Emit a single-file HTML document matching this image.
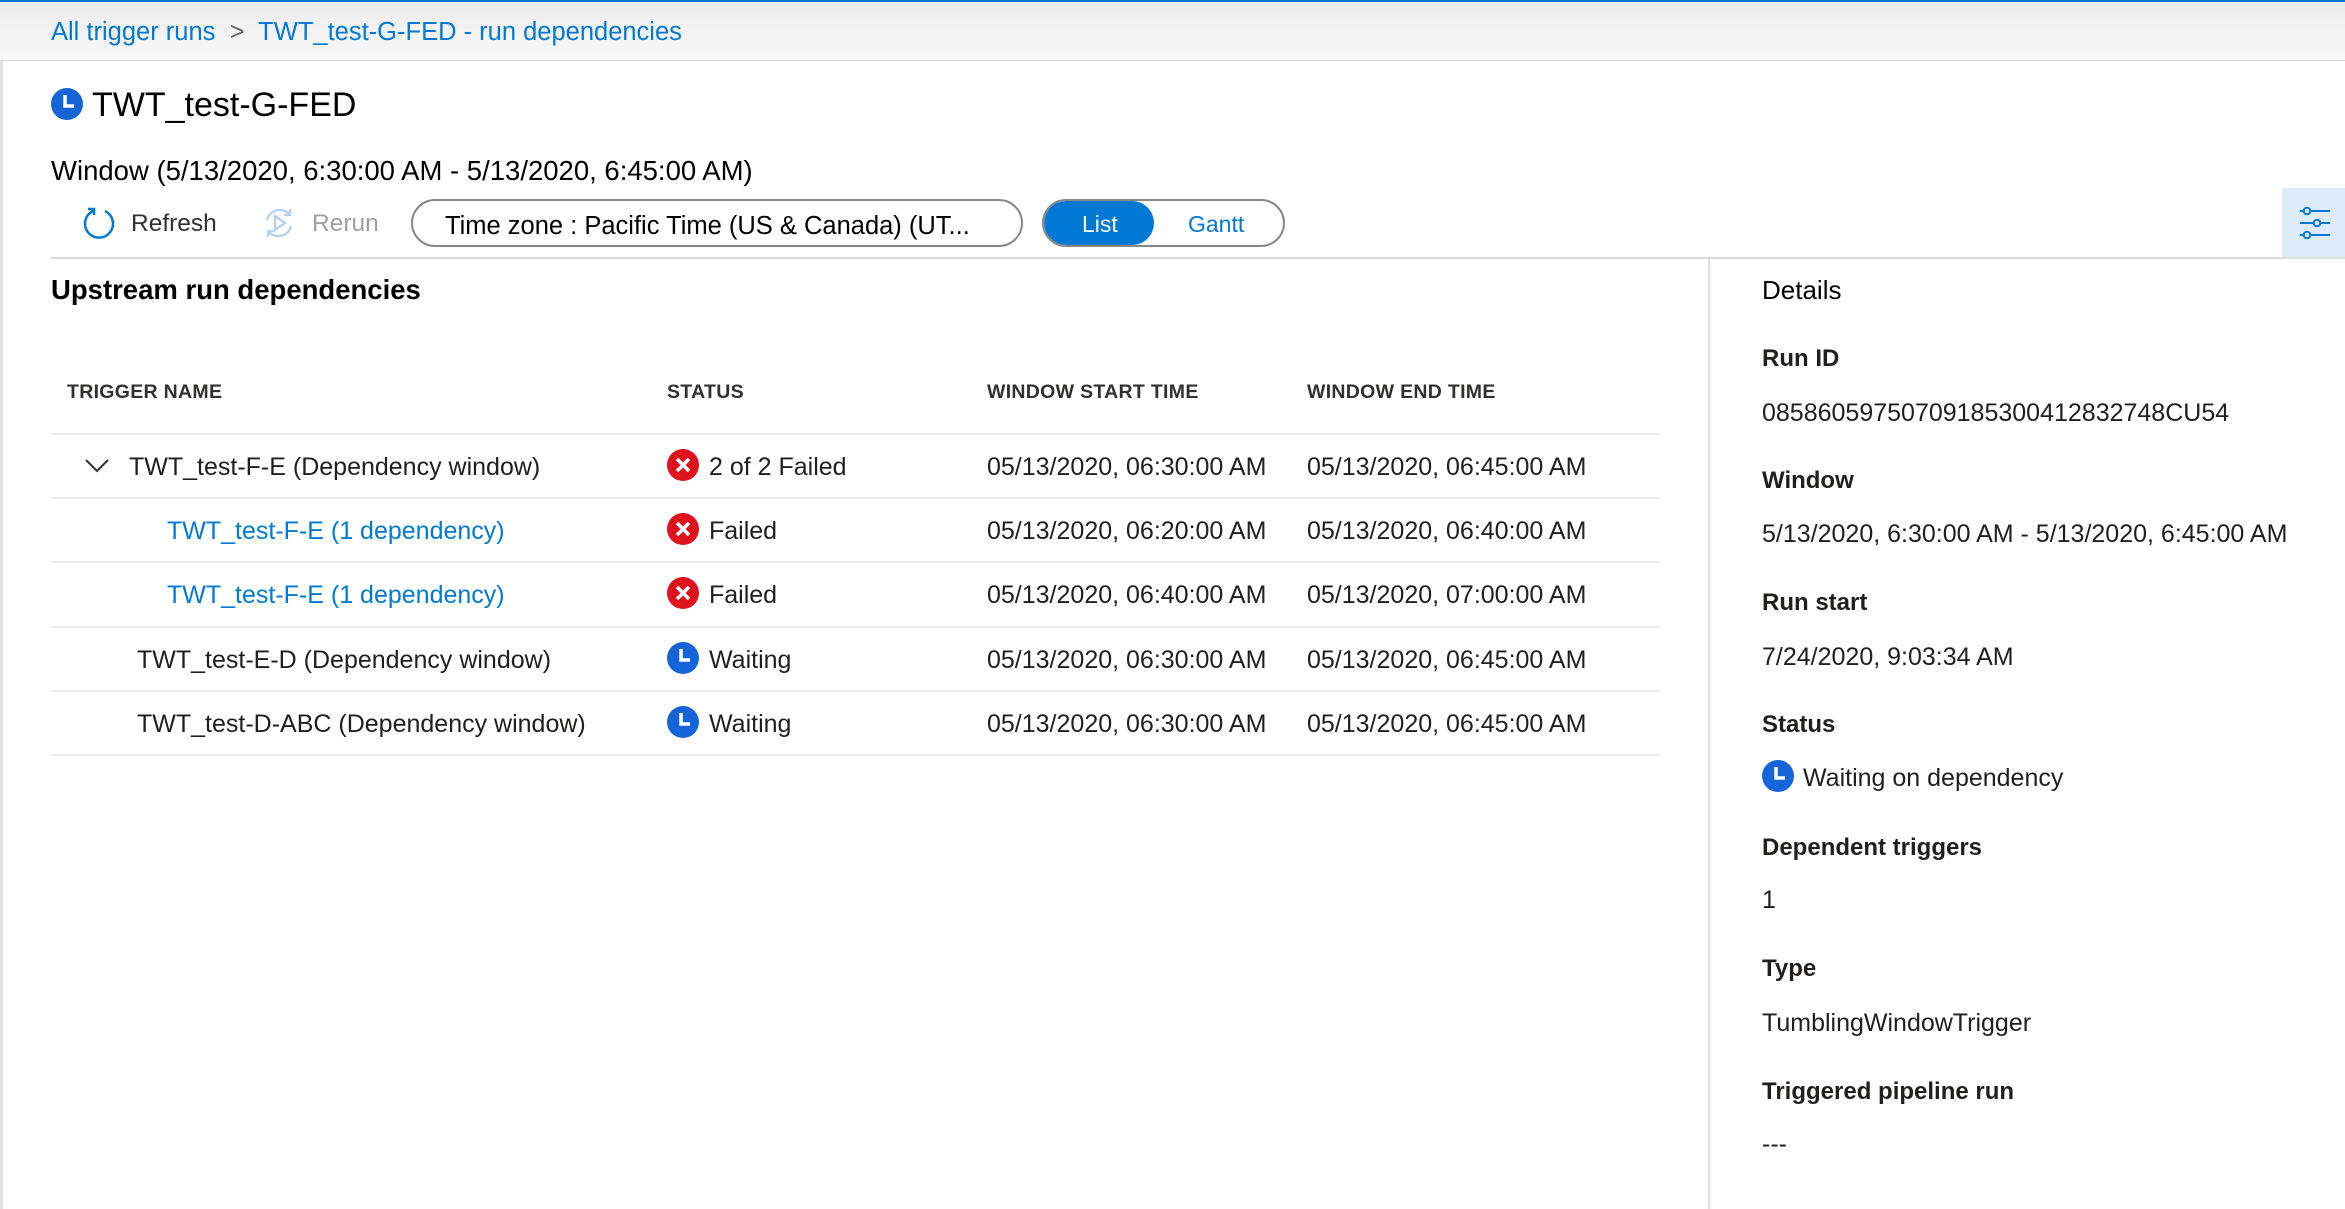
<!DOCTYPE html>
<html><head><meta charset="utf-8"><style>
*{margin:0;padding:0;box-sizing:border-box}
body{width:2345px;height:1209px;overflow:hidden;background:#fff;font-family:"Liberation Sans",sans-serif;color:#201f1e;position:relative}
.a{position:absolute;white-space:nowrap}
.t{font-size:25px;line-height:30px}
.hd{font-size:19.5px;font-weight:bold;color:#323130;letter-spacing:0.3px}
.ln{position:absolute;height:2px;background:#edebe9;left:51px;width:1609px}
.lbl{font-size:24px;font-weight:bold;color:#201f1e}
.link{color:#0078d4}
</style></head><body>
<div class="a" style="left:0;top:0;width:2345px;height:61px;background:linear-gradient(#ececec,#f8f8f8);border-top:2px solid #0078d4;border-bottom:1px solid #d6d6d6"></div>
<div class="a" style="left:0;top:61px;width:3px;height:1148px;background:#e1e1e1"></div>
<div class="a t link" style="left:51px;top:17px;font-size:25.5px">All trigger runs &nbsp;<span style="color:#666">&gt;</span>&nbsp; TWT_test-G-FED - run dependencies</div>

<svg class="a" style="left:51px;top:88px" width="32" height="32" viewBox="0 0 32 32"><circle cx="16" cy="16" r="16" fill="#1565d8"/><path d="M14 7v11h9" stroke="#fff" stroke-width="3.5" fill="none"/></svg>
<div class="a" style="left:92px;top:84px;font-size:34px;line-height:42px;color:#000">TWT_test-G-FED</div>
<div class="a" style="left:51px;top:155px;font-size:27.5px;line-height:32px;color:#000">Window (5/13/2020, 6:30:00 AM - 5/13/2020, 6:45:00 AM)</div>

<svg class="a" style="left:82px;top:206px" width="34" height="34" viewBox="0 0 34 34"><path d="M11 5A14 14 0 1 0 23 5" stroke="#0078d4" stroke-width="2.5" fill="none"/><path d="M6 3h6v6" stroke="#0078d4" stroke-width="2.5" fill="none"/></svg>
<div class="a t" style="left:131px;top:209px;font-size:24.5px;color:#323130">Refresh</div>
<svg class="a" style="left:262px;top:206px" width="34" height="34" viewBox="0 0 34 34"><path d="M5 14A13 13 0 0 1 28 9M29 20A13 13 0 0 1 6 25" stroke="#b3d2f2" stroke-width="2.3" fill="none"/><path d="M13 10v14l10-7z" stroke="#b3d2f2" stroke-width="2.3" fill="none"/><path d="M28 3v6h-6M6 31v-6h6" stroke="#b3d2f2" stroke-width="2.3" fill="none"/></svg>
<div class="a t" style="left:312px;top:209px;font-size:24.5px;color:#a19f9d">Rerun</div>

<div class="a" style="left:411px;top:199px;width:612px;height:48px;border:2px solid #8a8886;border-radius:24px"></div>
<div class="a" style="left:445px;top:211px;font-size:25.5px;line-height:30px;color:#000">Time zone : Pacific Time (US &amp; Canada) (UT...</div>

<div class="a" style="left:1042px;top:199px;width:243px;height:48px;border:2px solid #8a8886;border-radius:24px;overflow:hidden">
<div style="position:absolute;left:0;top:0;width:110px;height:44px;background:#0078d4;border-radius:22px"></div></div>
<div class="a" style="left:1082px;top:209px;font-size:23px;line-height:30px;color:#fff">List</div>
<div class="a link" style="left:1188px;top:209px;font-size:23px;line-height:30px">Gantt</div>

<div class="a" style="left:2282px;top:188px;width:63px;height:70px;background:#deecf9"></div>
<svg class="a" style="left:2298px;top:205px" width="34" height="36" viewBox="0 0 34 36"><g stroke="#0078d4" stroke-width="2" fill="none"><path d="M2 6h4M12 6h20M2 18h14M22 18h10M2 30h4M12 30h20"/><circle cx="9" cy="6" r="3.3"/><circle cx="19" cy="18" r="3.3"/><circle cx="9" cy="30" r="3.3"/></g></svg>

<div class="a" style="left:51px;top:257px;width:2294px;height:2px;background:#dcdcdc"></div>
<div class="a" style="left:1708px;top:259px;width:2px;height:950px;background:#e1e1e1"></div>

<div class="a" style="left:51px;top:274px;font-size:27.5px;line-height:32px;font-weight:bold;color:#000">Upstream run dependencies</div>

<div class="a hd" style="left:67px;top:381px">TRIGGER NAME</div>
<div class="a hd" style="left:667px;top:381px">STATUS</div>
<div class="a hd" style="left:987px;top:381px">WINDOW START TIME</div>
<div class="a hd" style="left:1307px;top:381px">WINDOW END TIME</div>

<div class="ln" style="top:433px"></div><div class="ln" style="top:497px"></div><div class="ln" style="top:561px"></div><div class="ln" style="top:626px"></div><div class="ln" style="top:690px"></div><div class="ln" style="top:754px"></div>

<svg class="a" style="left:85px;top:459px" width="24" height="14" viewBox="0 0 24 14"><path d="M1 1l11 11L23 1" stroke="#323130" stroke-width="2" fill="none"/></svg>

<div class="a t" style="left:129px;top:452px">TWT_test-F-E (Dependency window)</div>
<div class="a t link" style="left:167px;top:516px">TWT_test-F-E (1 dependency)</div>
<div class="a t link" style="left:167px;top:580px">TWT_test-F-E (1 dependency)</div>
<div class="a t" style="left:137px;top:645px">TWT_test-E-D (Dependency window)</div>
<div class="a t" style="left:137px;top:709px">TWT_test-D-ABC (Dependency window)</div>

<svg class="a" style="left:667px;top:449px" width="32" height="32" viewBox="0 0 32 32"><circle cx="16" cy="16" r="16" fill="#e0111f"/><path d="M10 10l12 12M22 10L10 22" stroke="#fff" stroke-width="3.5"/></svg>
<svg class="a" style="left:667px;top:513px" width="32" height="32" viewBox="0 0 32 32"><circle cx="16" cy="16" r="16" fill="#e0111f"/><path d="M10 10l12 12M22 10L10 22" stroke="#fff" stroke-width="3.5"/></svg>
<svg class="a" style="left:667px;top:577px" width="32" height="32" viewBox="0 0 32 32"><circle cx="16" cy="16" r="16" fill="#e0111f"/><path d="M10 10l12 12M22 10L10 22" stroke="#fff" stroke-width="3.5"/></svg>
<svg class="a" style="left:667px;top:642px" width="32" height="32" viewBox="0 0 32 32"><circle cx="16" cy="16" r="16" fill="#1565d8"/><path d="M14 7v11h9" stroke="#fff" stroke-width="3.5" fill="none"/></svg>
<svg class="a" style="left:667px;top:706px" width="32" height="32" viewBox="0 0 32 32"><circle cx="16" cy="16" r="16" fill="#1565d8"/><path d="M14 7v11h9" stroke="#fff" stroke-width="3.5" fill="none"/></svg>

<div class="a t" style="left:709px;top:452px">2 of 2 Failed</div>
<div class="a t" style="left:709px;top:516px">Failed</div>
<div class="a t" style="left:709px;top:580px">Failed</div>
<div class="a t" style="left:709px;top:645px">Waiting</div>
<div class="a t" style="left:709px;top:709px">Waiting</div>

<div class="a t" style="left:987px;top:452px">05/13/2020, 06:30:00 AM</div>
<div class="a t" style="left:987px;top:516px">05/13/2020, 06:20:00 AM</div>
<div class="a t" style="left:987px;top:580px">05/13/2020, 06:40:00 AM</div>
<div class="a t" style="left:987px;top:645px">05/13/2020, 06:30:00 AM</div>
<div class="a t" style="left:987px;top:709px">05/13/2020, 06:30:00 AM</div>

<div class="a t" style="left:1307px;top:452px">05/13/2020, 06:45:00 AM</div>
<div class="a t" style="left:1307px;top:516px">05/13/2020, 06:40:00 AM</div>
<div class="a t" style="left:1307px;top:580px">05/13/2020, 07:00:00 AM</div>
<div class="a t" style="left:1307px;top:645px">05/13/2020, 06:45:00 AM</div>
<div class="a t" style="left:1307px;top:709px">05/13/2020, 06:45:00 AM</div>

<div class="a" style="left:1762px;top:274px;font-size:26px;line-height:32px;color:#000">Details</div>
<div class="a lbl" style="left:1762px;top:345px">Run ID</div>
<div class="a t" style="left:1762px;top:398px">08586059750709185300412832748CU54</div>
<div class="a lbl" style="left:1762px;top:467px">Window</div>
<div class="a t" style="left:1762px;top:519px">5/13/2020, 6:30:00 AM - 5/13/2020, 6:45:00 AM</div>
<div class="a lbl" style="left:1762px;top:589px">Run start</div>
<div class="a t" style="left:1762px;top:642px">7/24/2020, 9:03:34 AM</div>
<div class="a lbl" style="left:1762px;top:711px">Status</div>
<svg class="a" style="left:1762px;top:760px" width="32" height="32" viewBox="0 0 32 32"><circle cx="16" cy="16" r="16" fill="#1565d8"/><path d="M14 7v11h9" stroke="#fff" stroke-width="3.5" fill="none"/></svg>
<div class="a t" style="left:1803px;top:763px">Waiting on dependency</div>
<div class="a lbl" style="left:1762px;top:834px">Dependent triggers</div>
<div class="a t" style="left:1762px;top:885px">1</div>
<div class="a lbl" style="left:1762px;top:955px">Type</div>
<div class="a t" style="left:1762px;top:1008px">TumblingWindowTrigger</div>
<div class="a lbl" style="left:1762px;top:1078px">Triggered pipeline run</div>
<div class="a t" style="left:1762px;top:1129px">---</div>
</body></html>
